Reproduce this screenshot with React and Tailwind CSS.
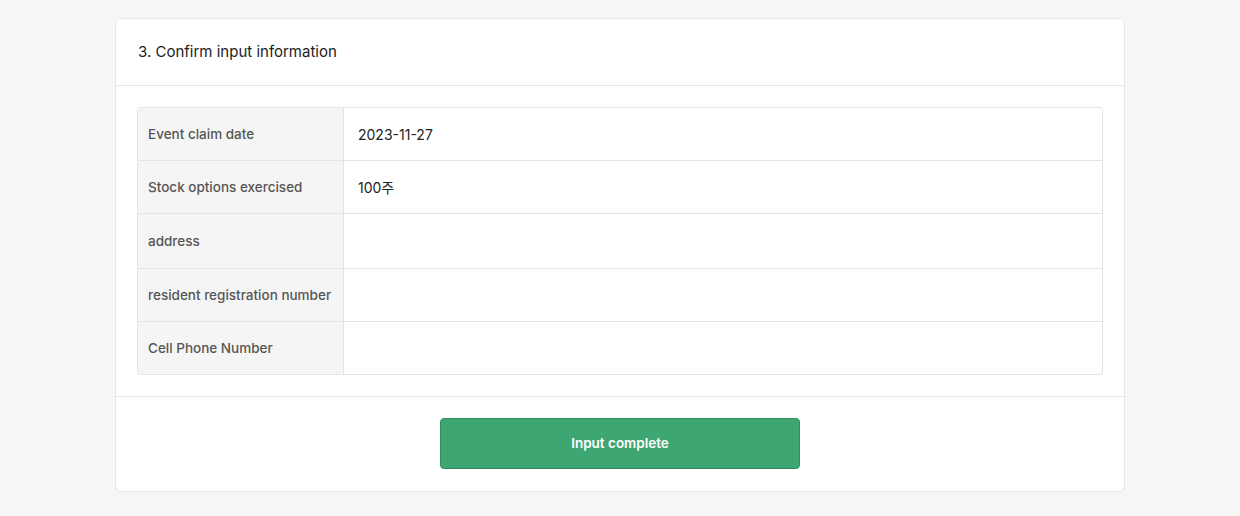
import React from 'react';

const rows = [
  { label: 'Event claim date', value: '2023-11-27', h: 'h-[52px]' },
  { label: 'Stock options exercised', value: '100주', h: 'h-[53px]' },
  { label: 'address', value: '', h: 'h-[55px]' },
  { label: 'resident registration number', value: '', h: 'h-[53px]' },
  { label: 'Cell Phone Number', value: '', h: 'h-[53px]' },
];

export default function App() {
  return (
    <div
      className="min-h-[516px] w-full bg-[#f6f6f6] pt-[18px]"
      style={{ fontFamily: 'Inter, "Noto Sans CJK KR", sans-serif' }}
    >
      <div className="mx-auto w-[1010px] rounded-[6px] border border-[#e8e8e8] bg-white">
        {/* 헤더 */}
        <div className="flex h-[67px] items-center border-b border-[#e6e6e6] px-[22px]">
          <h2 className="text-[15px] text-[#222]">3. Confirm input information</h2>
        </div>

        {/* 입력 정보 표 */}
        <div className="border-b border-[#e6e6e6] p-[21px]">
          <div className="overflow-hidden rounded-[3px] border border-[#e4e4e4]">
            {rows.map((r, i) => (
              <div
                key={r.label}
                className={`flex ${r.h} ${i > 0 ? 'border-t border-[#e4e4e4]' : ''}`}
              >
                <div className="flex w-[206px] shrink-0 items-center whitespace-nowrap border-r border-[#e4e4e4] bg-[#f5f5f5] px-[10px] text-[13.5px] font-medium text-[#555]">
                  {r.label}
                </div>
                <div className="flex flex-1 items-center px-[14px] text-[14px] text-[#222]">
                  {r.value}
                </div>
              </div>
            ))}
          </div>
        </div>

        {/* 버튼 */}
        <div className="flex justify-center pb-[22px] pt-[21px]">
          <button className="h-[51px] w-[360px] rounded-[4px] border border-[#2f8d5f] bg-[#3ea672] text-[13.5px] font-semibold text-white">
            Input complete
          </button>
        </div>
      </div>
    </div>
  );
}
